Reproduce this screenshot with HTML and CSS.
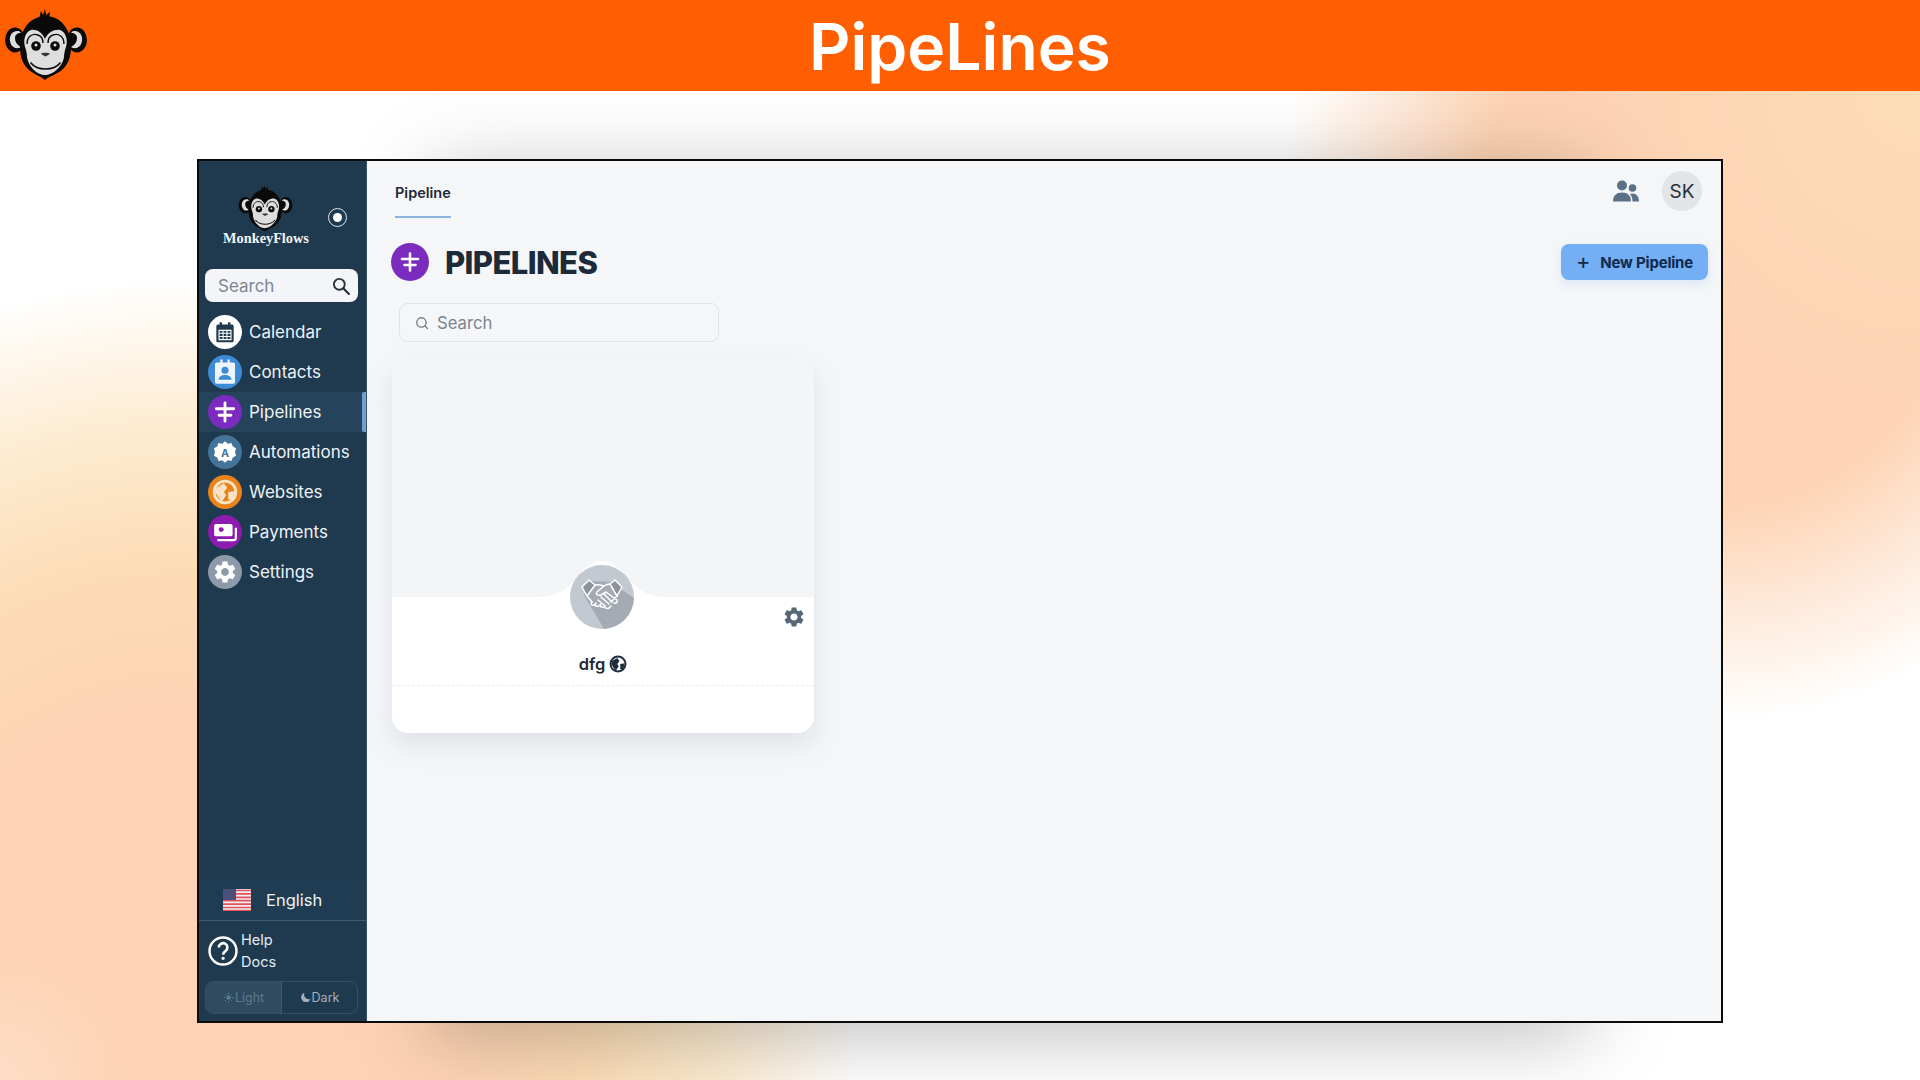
FILE: index.html
```html
<!DOCTYPE html>
<html lang="en">
<head>
<meta charset="utf-8">
<title>PipeLines</title>
<link rel="stylesheet" href="styles.css">
</head>
<body>
<svg class="defs" width="0" height="0" aria-hidden="true">
  <defs>
    <symbol id="monkey" viewBox="0 0 92 90">
      <path d="M39 19 L41 11 L43 15 L45 9 L46 15 L50 12 L49 19 Z" fill="#0a0a0a"/>
      <ellipse cx="15" cy="40" rx="10" ry="12.5" fill="#0a0a0a"/>
      <ellipse cx="77" cy="40" rx="10" ry="12.5" fill="#0a0a0a"/>
      <path d="M19 31 C12 30 9 36 10 41 C11 47 16 50 21 47 C17 45 15 42 15 38 C15 35 17 33 21 33 Z" fill="#dedede"/>
      <path d="M73 31 C80 30 83 36 82 41 C81 47 76 50 71 47 C75 45 77 42 77 38 C77 35 75 33 71 33 Z" fill="#dedede"/>
      <path d="M46 16 C30 16 20 30 20 46 C20 56 22 63 28 69 C33 74 40 76 45 80 C50 76 58 74 63 69 C69 63 71 56 71 46 C71 30 61 16 46 16 Z" fill="#0a0a0a"/>
      <path d="M45 39 C42 32 36 29 31 30 C25 32 23 40 25 47 C26 50 27 53 27 57 C28 65 36 75 45 75 C54 75 63 65 64 57 C64 53 65 50 66 47 C68 40 66 32 60 30 C55 29 48 32 45 39 Z" fill="#dedede"/>
      <path d="M27 44 C27 36 33 33 38 35 C41 36 43 39 43 43" fill="none" stroke="#0a0a0a" stroke-width="1.4"/>
      <path d="M64 44 C64 36 58 33 53 35 C50 36 48 39 48 43" fill="none" stroke="#0a0a0a" stroke-width="1.4"/>
      <circle cx="36" cy="46" r="4.8" fill="#0a0a0a"/>
      <circle cx="55" cy="46" r="4.8" fill="#0a0a0a"/>
      <circle cx="36" cy="45" r="1.5" fill="#dedede"/>
      <circle cx="55" cy="45" r="1.5" fill="#dedede"/>
      <path d="M41 53.5 C43 52.5 48 52.5 50 53.5 C49 55.5 47 55 45.5 56.5 C44 55 42 55.5 41 53.5 Z" fill="#333"/>
      <path d="M31 63 C37 71 54 71 60 63" fill="none" stroke="#0a0a0a" stroke-width="1.6" stroke-linecap="round"/>
    </symbol>
    <symbol id="gear" viewBox="0 0 24 24">
      <path fill-rule="evenodd" d="M19.14 12.94c.04-.3.06-.61.06-.94 0-.32-.02-.64-.07-.94l2.03-1.58c.18-.14.23-.41.12-.61l-1.92-3.32c-.12-.22-.37-.29-.59-.22l-2.39.96c-.5-.38-1.03-.7-1.62-.94l-.36-2.54c-.04-.24-.24-.41-.48-.41h-3.84c-.24 0-.43.17-.47.41l-.36 2.54c-.59.24-1.13.57-1.62.94l-2.39-.96c-.22-.08-.47 0-.59.22L2.74 8.87c-.12.21-.08.47.12.61l2.03 1.58c-.05.3-.09.63-.09.94s.02.64.07.94l-2.03 1.58c-.18.14-.23.41-.12.61l1.92 3.32c.12.22.37.29.59.22l2.39-.96c.5.38 1.03.7 1.62.94l.36 2.54c.05.24.24.41.48.41h3.84c.24 0 .44-.17.47-.41l.36-2.54c.59-.24 1.13-.56 1.62-.94l2.39.96c.22.08.47 0 .59-.22l1.92-3.32c.12-.22.07-.47-.12-.61l-2.01-1.58zM12 15.6c-1.98 0-3.6-1.62-3.6-3.6s1.62-3.6 3.6-3.6 3.6 1.62 3.6 3.6-1.62 3.6-3.6 3.6z"/>
    </symbol>
    <symbol id="pipe" viewBox="0 0 24 24">
      <path d="M12 3.5v17M4 9h16M6.500 15h11" fill="none" stroke="#fff" stroke-width="2.6" stroke-linecap="round"/>
    </symbol>
    <symbol id="globe" viewBox="0 0 24 24">
      <circle cx="12" cy="12" r="10" fill="none" stroke="currentColor" stroke-width="2.600"/>
      <path d="M4 8 L11 4 L14 8 L11 12 L13 15 L9 21 L6 17 L3 12 Z M15 12 L21 11 L19 19 L15 19 Z" fill="currentColor"/>
    </symbol>
  </defs>
</svg>

<div class="page">
  <header class="banner">
    <svg class="banner-logo"><use href="#monkey"/></svg>
    <h1 class="banner-title">PipeLines</h1>
  </header>

  <div class="stage">
    <div class="window">
      <aside class="sidebar">
        <div class="brand">
          <div class="brand-mark">
            <svg class="brand-logo"><use href="#monkey"/></svg>
            <span class="brand-name">MonkeyFlows</span>
          </div>
          <span class="radio"><span class="radio-dot"></span></span>
        </div>

        <div class="side-search">
          <span class="side-search-text">Search</span>
          <svg class="side-search-icon" viewBox="0 0 24 24"><circle cx="10" cy="10" r="6.5" fill="none" stroke="#26323c" stroke-width="2.2"/><path d="M15 15l6.5 6.5" stroke="#26323c" stroke-width="2.6" stroke-linecap="round"/></svg>
        </div>

        <nav class="nav">
          <a class="nav-item">
            <span class="nav-icon ic-white">
              <svg viewBox="0 0 24 24"><path d="M4 6.5A1.5 1.5 0 0 1 5.5 5H7V3h2.2v2h5.6V3H17v2h1.5A1.5 1.5 0 0 1 20 6.5V20a1.5 1.5 0 0 1-1.5 1.5h-13A1.5 1.5 0 0 1 4 20Z" fill="#1f3a4f"/><path d="M6.5 10.5h11v8.5h-11zM6.5 13.2h11M6.5 16.1h11M10.2 10.5V19M13.8 10.5V19" fill="none" stroke="#fff" stroke-width="1"/></svg>
            </span>
            <span class="nav-label">Calendar</span>
          </a>
          <a class="nav-item">
            <span class="nav-icon ic-blue">
              <svg viewBox="2 1 20 22"><path d="M3.500 5.500A1.500 1.500 0 0 1 5 4H8V1.500h2V4h4V1.500h2V4h3a1.500 1.500 0 0 1 1.500 1.500v15A1.500 1.500 0 0 1 19 22H5a1.500 1.500 0 0 1-1.500-1.500Z" fill="#eef4fb"/><circle cx="12" cy="10.5" r="3" fill="#3d8ad6"/><path d="M6.500 18.500c0-2.600 2.500-4 5.500-4s5.500 1.400 5.500 4Z" fill="#3d8ad6"/></svg>
            </span>
            <span class="nav-label">Contacts</span>
          </a>
          <a class="nav-item is-active">
            <span class="nav-icon ic-purple"><svg><use href="#pipe"/></svg></span>
            <span class="nav-label">Pipelines</span>
          </a>
          <a class="nav-item">
            <span class="nav-icon ic-steel">
              <svg viewBox="0 0 24 24"><path d="M12 2l2.600 2.300 3.400-.6 1.200 3.200 3 1.700-1 3.400 1 3.400-3 1.700-1.200 3.200-3.400-.6L12 22l-2.600-2.300-3.400.6-1.200-3.200-3-1.700 1-3.400-1-3.400 3-1.700L6 3.700l3.400.6Z" fill="#fff"/><text x="12" y="16.200" class="auto-letter">A</text></svg>
            </span>
            <span class="nav-label">Automations</span>
          </a>
          <a class="nav-item">
            <span class="nav-icon ic-orange globe-icon"><svg><use href="#globe"/></svg></span>
            <span class="nav-label">Websites</span>
          </a>
          <a class="nav-item">
            <span class="nav-icon ic-magenta">
              <svg viewBox="0 0 24 24"><rect x="2" y="4.500" width="17" height="11.500" rx="1.800" fill="#fff"/><circle cx="8.500" cy="9.800" r="2.300" fill="#8e1bb0"/><path d="M22 8v9.500a2 2 0 0 1-2 2H5" fill="none" stroke="#fff" stroke-width="2"/></svg>
            </span>
            <span class="nav-label">Payments</span>
          </a>
          <a class="nav-item">
            <span class="nav-icon ic-grey gear-icon"><svg><use href="#gear"/></svg></span>
            <span class="nav-label">Settings</span>
          </a>
        </nav>

        <div class="side-foot">
          <div class="lang">
            <svg class="flag" viewBox="0 0 28 22">
              <rect width="28" height="22" fill="#f3eeee"/>
              <path d="M0 1.500h28M0 4.900h28M0 8.300h28M0 11.700h28M0 15.100h28M0 18.500h28M0 21.500h28" stroke="#e2535f" stroke-width="1.700"/>
              <rect width="13" height="11" fill="#4a4f7c"/>
            </svg>
            <span class="lang-name">English</span>
          </div>
          <div class="help">
            <svg class="help-icon" viewBox="0 0 30 30"><circle cx="15" cy="15" r="13.500" fill="none" stroke="#fff" stroke-width="2.400"/><path d="M10.800 11.500a4.300 4.300 0 1 1 6.600 3.600c-1.500 1-2.300 1.800-2.300 3.600" fill="none" stroke="#fff" stroke-width="2.600"/><circle cx="15.100" cy="22.300" r="1.600" fill="#fff"/></svg>
            <div class="help-links"><span>Help</span><span>Docs</span></div>
          </div>
          <div class="theme">
            <span class="theme-opt is-on">
              <svg class="theme-icon" viewBox="0 0 24 24"><circle cx="12" cy="12" r="5" fill="#5d7a8e"/><path d="M12 1v4M12 19v4M1 12h4M19 12h4M4.200 4.200l2.800 2.800M17 17l2.800 2.800M4.200 19.800L7 17M17 7l2.800-2.800" stroke="#5d7a8e" stroke-width="2"/></svg>Light
            </span>
            <span class="theme-opt">
              <svg class="theme-icon" viewBox="0 0 24 24"><path d="M10 1.500a10.500 10.500 0 1 0 13 13.500A10 10 0 0 1 10 1.500Z" fill="#a4b1bd"/></svg>Dark
            </span>
          </div>
        </div>
      </aside>

      <main class="main">
        <div class="topbar">
          <div class="tab">Pipeline</div>
          <div class="top-actions">
            <svg class="people" viewBox="0 0 26 22"><circle cx="9" cy="5.500" r="5" fill="#5c7086"/><circle cx="19.500" cy="8" r="3.800" fill="#5c7086"/><path d="M0 21.500c0-6 3.500-9 9-9s9 3 9 9Z" fill="#5c7086"/><path d="M19.500 21.500h6.500c0-5-2.500-8-6.500-8-1 0-1.800.2-2.600.5 1.700 1.800 2.600 4.300 2.600 7.500Z" fill="#5c7086"/></svg>
            <span class="avatar">SK</span>
          </div>
        </div>

        <div class="title-row">
          <span class="title-icon"><svg><use href="#pipe"/></svg></span>
          <h2 class="title">PIPELINES</h2>
          <button class="new-btn"><span class="new-plus">+</span>New Pipeline</button>
        </div>

        <div class="search">
          <svg class="search-icon" viewBox="0 0 24 24"><circle cx="11" cy="11" r="8" fill="none" stroke="#6f7883" stroke-width="2.200"/><path d="M17 17l4.500 4.500" stroke="#6f7883" stroke-width="2.200" stroke-linecap="round"/></svg>
          <span class="search-text">Search</span>
        </div>

        <section class="card">
          <div class="card-cover"></div>
          <svg class="card-bump" viewBox="0 0 136 36"><path d="M0 36 C22 36 30 30 40 20 C48 8 58 0 68 0 C78 0 88 8 96 20 C106 30 114 36 136 36 Z" fill="#fff"/></svg>
          <div class="card-avatar">
            <svg viewBox="0 0 64 64">
              <circle cx="32" cy="32" r="32" fill="#c3c9d0"/>
              <path d="M14 30 L21 16 L44 17 L52 25 L64 33 A32 32 0 0 1 34 64 Z" fill="#a5abb2"/>
              <g fill="none" stroke="#fff" stroke-width="1.500" stroke-linecap="round" stroke-linejoin="round">
                <path d="M12 22l7-7 6 5-8 11zM52 22l-7-7-5 4 7 12z" fill="#8d9399"/>
                <path d="M25 20c3-1 6 0 9 1l-7 6c-2 2 1 4 4 3l5-3 11 8c1 2-1 4-3 3M17 31l5 6M47 31l-6 6"/>
                <path d="M34 21c3-2 4-2 6-2M34 29l8 8M31 32l8 7M28 35l7 6"/>
                <path d="M22 37c-2 2 0 4 2 3l2-2c-2 2 0 4 3 3l2-2c-2 2 1 4 3 3l1-1c-1 2 2 3 4 2l2-2"/>
              </g>
            </svg>
          </div>
          <svg class="card-gear"><use href="#gear"/></svg>
          <div class="card-body">
            <div class="card-name">dfg <svg class="card-globe"><use href="#globe"/></svg></div>
            <div class="card-foot"></div>
          </div>
        </section>
      </main>
    </div>
  </div>
</div>
</body>
</html>
```

FILE: styles.css
```css
* { box-sizing: border-box; }
html, body { margin: 0; padding: 0; height: 100%; }
body { font-family: "Inter", "Liberation Sans", sans-serif; color: #1f2937; overflow: hidden; }
.defs { position: absolute; }

.page {
  width: 1920px;
  height: 1080px;
  display: flex;
  flex-direction: column;
  overflow: hidden;
  background-color: #fff;
  background-image:
    radial-gradient(circle 130px at 0 1080px, rgba(253,226,208,.7) 0%, rgba(253,226,208,0) 100%),
    radial-gradient(circle 320px at 1920px 91px, rgba(252,222,183,.9) 0%, rgba(252,222,183,0) 100%),
    radial-gradient(ellipse 440px 490px at 1720px 230px, #fdd3b3 0%, #fdd3b3 55%, rgba(253,211,179,0) 100%),
    radial-gradient(ellipse 680px 720px at 180px 1000px, #fdd3b3 0%, #fdd3b3 40%, #fcdcb5 60%, rgba(253,234,205,.9) 80%, rgba(253,238,216,0) 100%);
}

.banner {
  height: 91px;
  flex: none;
  background: #ff5f00;
  display: flex;
  align-items: center;
  justify-content: center;
  position: relative;
}
.banner-logo { position: absolute; left: 0; top: 0; width: 92px; height: 90px; }
.banner-title { margin: 0; padding-top: 2px; color: #fff; font-size: 64.200px; font-weight: 600; line-height: 91px; }

.stage { flex: 1; display: flex; justify-content: center; padding: 68px 0 0 0; isolation: isolate; }
.window {
  width: 1526px;
  height: 864px;
  border: 2px solid #0b0b0b;
  display: flex;
  background: #f4f6f8;
  position: relative;
}
.window::before {
  content: "";
  position: absolute;
  left: 233px;
  right: 133px;
  top: 12px;
  bottom: -15px;
  background: rgba(0,0,0,.25);
  filter: blur(40px);
  z-index: -1;
}

/* sidebar */
.sidebar {
  width: 168px;
  flex: none;
  background: #1f3a4f;
  color: #eef2f6;
  display: flex;
  flex-direction: column;
  border-right: 1px solid #3a5366;
}
.brand { height: 106px; flex: none; display: flex; align-items: flex-start; padding: 18px 0 0 23px; }
.brand-mark { width: 88px; display: flex; flex-direction: column; align-items: center; }
.brand-logo { width: 61px; height: 59px; display: block; margin-left: -1px; }
.brand-name { font-family: "Liberation Serif", serif; font-weight: 700; font-size: 14.300px; line-height: 16px; color: #f2f5f7; margin-top: -8px; white-space: nowrap; }
.radio { width: 19px; height: 19px; border: 1.500px solid #dbe3e9; border-radius: 50%; display: flex; align-items: center; justify-content: center; margin: 29px 0 0 18px; }
.radio-dot { width: 9px; height: 9px; border-radius: 50%; background: #fff; }

.side-search {
  height: 33px;
  margin: 2px 8px 0 6px;
  background: #f3f5f8;
  border-radius: 8px;
  display: flex;
  align-items: center;
  justify-content: space-between;
  padding: 0 7px 0 13px;
  flex: none;
}
.side-search-text { font-size: 17px; color: #7d8791; }
.side-search-icon { width: 20px; height: 20px; }

.nav { display: flex; flex-direction: column; margin-top: 10px; }
.nav-item { height: 40px; display: flex; align-items: center; padding-left: 9px; gap: 7px; position: relative; }
.nav-item.is-active { background: #26435c; }
.nav-item.is-active::after { content: ""; position: absolute; right: 0; top: 0; bottom: 0; width: 4px; background: #6f9fd8; border-radius: 2px 0 0 2px; }
.nav-icon { width: 34px; height: 34px; border-radius: 50%; display: flex; align-items: center; justify-content: center; flex: none; }
.nav-icon svg { width: 26px; height: 26px; display: block; }
.nav-label { font-size: 17px; color: #eef2f6; }
.ic-white { background: #fff; }
.ic-blue { background: #3d8ad6; }
.ic-purple { background: #7b2cbf; }
.ic-steel { background: #44749a; }
.ic-orange { background: #e8841a; }
.ic-magenta { background: #8e1bb0; }
.ic-grey { background: #8d9aa9; }
.globe-icon { color: #fbe3c8; }
.gear-icon svg { fill: #fff; }
.auto-letter { font-family: "Inter", sans-serif; font-size: 10px; font-weight: 700; fill: #44749a; text-anchor: middle; }

.side-foot { margin-top: auto; display: flex; flex-direction: column; }
.lang { height: 42px; display: flex; align-items: center; padding-left: 24px; gap: 15px; background: #1f3c52; border-bottom: 1px solid #415a6d; }
.flag { width: 28px; height: 22px; display: block; }
.lang-name { font-size: 16.500px; color: #eef2f6; }
.help { height: 60px; display: flex; align-items: center; padding-left: 9px; gap: 3px; background: #1f3a4f; }
.help-icon { width: 30px; height: 30px; flex: none; }
.help-links { display: flex; flex-direction: column; gap: 4px; font-size: 14.500px; line-height: 18px; color: #e6ebf2; }
.theme { height: 33px; margin: 0 8px 7px 6px; border: 1px solid #36505f; border-radius: 8px; display: flex; overflow: hidden; flex: none; }
.theme-opt { flex: 1; display: flex; align-items: center; justify-content: center; font-size: 12.500px; color: #a4b1bd; gap: 1px; }
.theme-opt.is-on { background: #304b60; color: #5d7a8e; border-right: 1px solid #3f5a6d; }
.theme-icon { width: 11px; height: 11px; }

/* main */
.main { flex: 1; display: flex; flex-direction: column; padding: 1px 13px 0 25px; min-width: 0; }
.topbar { height: 57px; display: flex; justify-content: space-between; flex: none; }
.tab { margin: 0 0 0 3px; height: 56px; padding-top: 21px; font-size: 14.500px; font-weight: 600; line-height: 20px; color: #1f2937; border-bottom: 2px solid #8db5d8; width: 56px; white-space: nowrap; }
.top-actions { display: flex; align-items: flex-start; gap: 23px; padding: 9px 6px 0 0; }
.people { width: 26px; height: 22px; margin-top: 9px; }
.avatar { width: 40px; height: 40px; border-radius: 50%; background: #e2e4e7; display: flex; align-items: center; justify-content: center; font-size: 19px; color: #27313b; }

.title-row { height: 38px; margin-top: 24px; display: flex; align-items: center; flex: none; }
.title-icon { width: 38px; height: 38px; border-radius: 50%; background: #7b2cbf; display: flex; align-items: center; justify-content: center; margin-left: -1px; }
.title-icon svg { width: 24px; height: 24px; }
.title { margin: 0 0 0 16px; font-size: 31px; font-weight: 800; color: #1d2a38; letter-spacing: -.6px; }
.new-btn { margin-left: auto; width: 147px; height: 36px; background: #74aef5; border: 0; border-radius: 8px; font: 700 15px "Inter", sans-serif; color: #0f2a4a; display: flex; align-items: center; justify-content: center; gap: 10px; box-shadow: 0 4px 10px rgba(116,174,245,.2); white-space: nowrap; letter-spacing: -.2px; padding: 0; }
.new-plus { font-size: 22px; font-weight: 400; line-height: 1; margin-top: -2px; }

.search { width: 320px; height: 39px; margin: 22px 0 0 7px; flex: none; border: 1px solid #e1e4e8; border-radius: 8px; display: flex; align-items: center; padding-left: 15px; gap: 8px; }
.search-icon { width: 14px; height: 14px; }
.search-text { font-size: 16.700px; color: #7c8490; }

.card { width: 422px; height: 374px; margin-top: 17px; border-radius: 16px; background: #fff; position: relative; box-shadow: 0 12px 24px rgba(140,150,170,.2); overflow: hidden; display: flex; flex-direction: column; }
.card-cover { height: 238px; flex: none; background: #f3f5f7; }
.card-bump { position: absolute; left: 142px; top: 202px; width: 136px; height: 36px; }
.card-avatar { position: absolute; left: 178px; top: 206px; width: 64px; height: 64px; }
.card-avatar svg { width: 64px; height: 64px; display: block; }
.card-gear { position: absolute; left: 390px; top: 246px; width: 24px; height: 24px; fill: #566778; }
.card-body { flex: 1; display: flex; flex-direction: column; padding-top: 57px; }
.card-name { display: flex; align-items: center; justify-content: center; gap: 4px; font-size: 16.500px; font-weight: 600; color: #1f2937; border-bottom: 1px dashed #ececf0; padding: 0 0 11px; box-sizing: content-box; height: 20px; }
.card-globe { width: 18px; height: 18px; color: #1f2d3d; }
.card-foot { flex: 1; }
```
